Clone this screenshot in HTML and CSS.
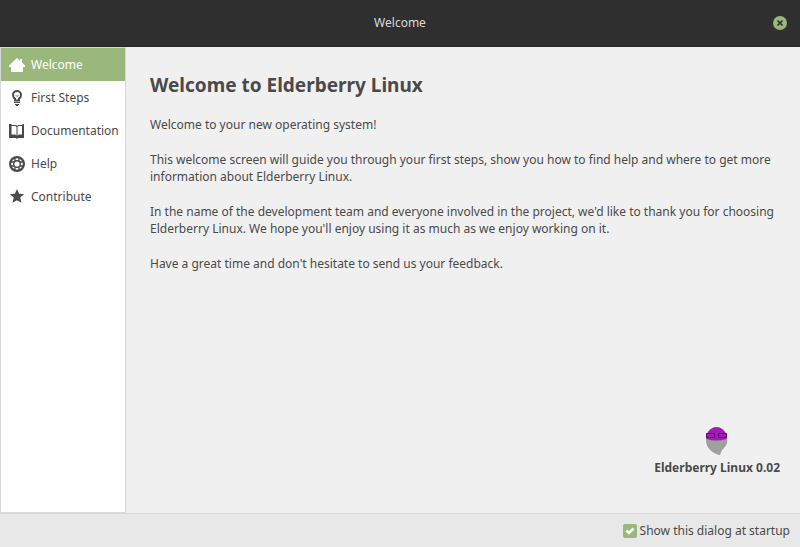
FILE: index.html
```
<!DOCTYPE html>
<html lang="en">
<head>
<meta charset="utf-8">
<title>Welcome</title>
<link rel="stylesheet" href="styles.css">
</head>
<body>
<header class="titlebar">
  <h1 class="title">Welcome</h1>
  <button class="close" type="button" aria-label="Close">
    <svg viewBox="0 0 14 14" width="14" height="14"><circle cx="7" cy="7" r="7" fill="#9ab87c"/><path d="M4.500 4.500l5 5m0-5l-5 5" stroke="#2f2f2f" stroke-width="1.700"/></svg>
  </button>
</header>
<div class="body">
  <nav class="sidebar">
    <a class="item active" href="#welcome"><svg class="icon" viewBox="0 0 16 16"><path d="M8 1L0 8.500V10h2v5h12v-5h2V8.500L13 5.500V2h-2v1.700z"/></svg>Welcome</a>
    <a class="item" href="#steps"><svg class="icon" viewBox="0 0 16 16"><path d="M6 10.500V8.700C4.500 7.700 4 6.500 4 5a4 4 0 0 1 8 0C12 6.500 11.500 7.700 10 8.700v1.800z" fill="none" stroke="currentColor" stroke-width="2"/><path d="M6.500 5L8 6.500 9.500 5" fill="none" stroke="currentColor" stroke-width=".8"/><path d="M5 12h6v1H5zM6 14h4v1H9v1H7v-1H6z"/></svg>First Steps</a>
    <a class="item" href="#docs"><svg class="icon" viewBox="0 0 16 16"><path fill-rule="evenodd" d="M0 1h2.500v1H7l1 1 1-1h4.500V1H15v14H9l-1 1-1-1H0zM2.500 3v8.500H6L7.500 12.500V4L6.500 3zM8.500 4v8.500l1.500-1h3V3H9.500z"/></svg>Documentation</a>
    <a class="item" href="#help"><svg class="icon" viewBox="0 0 16 16"><circle cx="8" cy="8" r="6.900" fill="none" stroke="currentColor" stroke-width="2.200"/><circle cx="8" cy="8" r="3.300" fill="none" stroke="currentColor" stroke-width="1.400"/><path d="M6 1v4M10 1v4M6 11v4M10 11v4M1 6h4M1 10h4M11 6h4M11 10h4" fill="none" stroke="currentColor" stroke-width="1.300"/></svg>Help</a>
    <a class="item" href="#contribute"><svg class="icon" viewBox="0 0 16 16"><path d="M8 0l2.100 4.800 5 .4-3.900 3.400 1.300 5.200L8 11.200l-4.500 2.600 1.300-5.200L.9 5.200l5-.4z"/></svg>Contribute</a>
  </nav>
  <main class="content">
    <h2 class="heading">Welcome to Elderberry Linux</h2>
    <p>Welcome to your new operating system!</p>
    <p>This welcome screen will guide you through your first steps, show you how to find help and where to get more information about Elderberry Linux.</p>
    <p>In the name of the development team and everyone involved in the project, we'd like to thank you for choosing Elderberry Linux. We hope you'll enjoy using it as much as we enjoy working on it.</p>
    <p>Have a great time and don't hesitate to send us your feedback.</p>
    <div class="brand">
      <svg viewBox="0 0 24 32" width="24" height="32"><path d="M1 13h21c1 6-1 8-4 11-2 2-2 4-3 6C9 29 0 24 1 13z" fill="#a0a09e"/><path d="M1.500 14C0 9 5 2 11.500 2S23 9 21.500 14q-10 3-20 0z" fill="#a519b8"/><path d="M1.500 8.500h8v4h-8zM13.500 8.500h8v4h-8z" fill="none" stroke="#5c0868"/></svg>
      <strong>Elderberry Linux 0.02</strong>
    </div>
  </main>
</div>
<footer class="footer">
  <label class="startup"><input type="checkbox" checked><svg class="tick" viewBox="0 0 14 14"><path d="M3.500 6.500l2.500 2.500 4.500-4.500" fill="none" stroke="#fff" stroke-width="2.500"/></svg>Show this dialog at startup</label>
</footer>
</body>
</html>
```
FILE: styles.css
```
* { box-sizing: border-box; }
body { margin: 0; min-height: 100vh; display: flex; flex-direction: column; font: 12px/17px "Noto Sans", sans-serif; color: #4a4a4a; background: #f0f0f0; }
.titlebar { height: 47px; display: grid; grid-template-columns: 1fr auto 1fr; align-items: center; padding: 0 13px 1px; background: #2f2f2f; border-bottom: 1px solid #262626; }
.title { grid-column: 2; margin: 0; font-size: 12px; font-weight: 400; color: #dadada; }
.close { justify-self: end; display: flex; padding: 0; border: 0; background: none; }
.body { flex: 1; display: flex; }
.sidebar { flex: none; width: 126px; background: #fff; border: 1px solid #d8d8d8; }
.item { display: flex; align-items: center; gap: 6px; height: 33px; padding: 0 8px; color: inherit; text-decoration: none; white-space: nowrap; }
.item.active { background: #9ab87c; color: #fff; }
.icon { flex: none; width: 16px; height: 16px; fill: currentColor; }
.content { flex: 1; display: flex; flex-direction: column; padding: 24px 20px 37px 24px; }
.heading { margin: 0 0 16px; font-size: 19px; line-height: 29px; font-weight: 700; }
.content p { margin: 0 0 18px; }
.brand { margin-top: auto; align-self: flex-end; display: flex; flex-direction: column; align-items: center; gap: 2px; }
.footer { height: 34px; display: flex; align-items: center; justify-content: flex-end; padding: 0 10px; background: #e8e8e8; border-top: 1px solid #d8d8d8; }
.startup { display: grid; grid-template-columns: 14px auto; align-items: center; column-gap: 3px; }
.startup input { grid-area: 1 / 1; appearance: none; width: 14px; height: 14px; margin: 0; border-radius: 2px; background: #9ab87c; }
.tick { grid-area: 1 / 1; width: 14px; height: 14px; pointer-events: none; visibility: hidden; }
input:checked + .tick { visibility: visible; }
```
